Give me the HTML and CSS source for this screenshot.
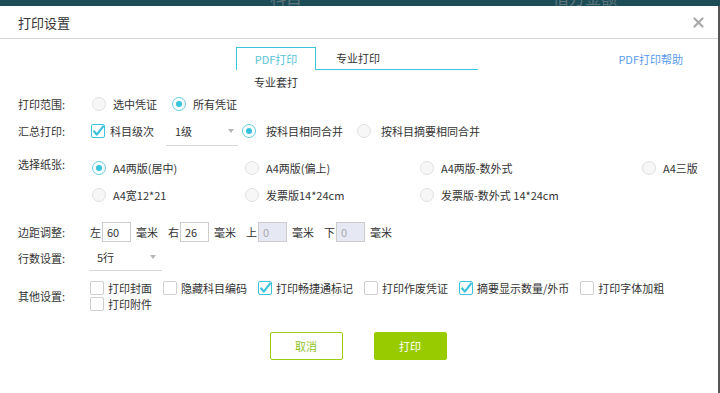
FILE: index.html
```html
<!DOCTYPE html>
<html lang="zh">
<head>
<meta charset="utf-8">
<title>打印设置</title>
<link rel="stylesheet" href="styles.css">
</head>
<body>
<div class="topbar"><span class="bg1">科目</span><span class="bg2">借方金额</span></div>
<div class="shell">
<div class="dialog">
  <div class="header">
    <span class="title">打印设置</span>
    <svg class="close" width="11" height="11" viewBox="0 0 11 11"><path d="M1.5 1.5 L9.5 9.5 M9.5 1.5 L1.5 9.5" stroke="#a9a9a9" stroke-width="2.2" stroke-linecap="round"/></svg>
  </div>

  <div class="tabs">
    <div class="tab active">PDF打印</div>
    <div class="tab-rest">专业打印</div>
    <a class="help">PDF打印帮助</a>
  </div>
  <div class="subtab">专业套打</div>

  <div class="row r1">
    <span class="label">打印范围:</span>
    <label class="opt"><span class="radio"></span>选中凭证</label>
    <label class="opt"><span class="radio on"></span>所有凭证</label>
  </div>

  <div class="row r2">
    <span class="label">汇总打印:</span>
    <label class="copt"><span class="check on"><svg width="14" height="14" viewBox="0 0 14 14"><path d="M2.6 6.8 L5.8 10.6 L12.6 1.8" fill="none" stroke="#3cc3db" stroke-width="2.2" stroke-linejoin="round"/></svg></span>科目级次</label>
    <div class="select s-level"><span>1级</span><i class="arrow"></i></div>
    <label class="opt m1"><span class="radio on"></span>按科目相同合并</label>
    <label class="opt"><span class="radio"></span>按科目摘要相同合并</label>
  </div>

  <div class="row r3">
    <span class="label">选择纸张:</span>
    <div class="paper">
      <label class="opt"><span class="radio on"></span>A4两版(居中)</label>
      <label class="opt"><span class="radio"></span>A4两版(偏上)</label>
      <label class="opt"><span class="radio"></span>A4两版-数外式</label>
      <label class="opt"><span class="radio"></span>A4三版</label>
      <label class="opt"><span class="radio"></span>A4宽12*21</label>
      <label class="opt"><span class="radio"></span>发票版14*24cm</label>
      <label class="opt"><span class="radio"></span>发票版-数外式 14*24cm</label>
    </div>
  </div>

  <div class="row r4">
    <span class="label">边距调整:</span>
    <span class="mg"><span>左</span><input class="num" value="60"><span>毫米</span></span>
    <span class="mg"><span>右</span><input class="num" value="26"><span>毫米</span></span>
    <span class="mg"><span>上</span><input class="num" value="0" disabled><span>毫米</span></span>
    <span class="mg"><span>下</span><input class="num" value="0" disabled><span>毫米</span></span>
  </div>

  <div class="row r5">
    <span class="label">行数设置:</span>
    <div class="select s-rows"><span>5行</span><i class="arrow"></i></div>
  </div>

  <div class="row r6">
    <span class="label">其他设置:</span>
    <div class="others">
      <label class="copt"><span class="check"></span>打印封面</label>
      <label class="copt"><span class="check"></span>隐藏科目编码</label>
      <label class="copt"><span class="check on"><svg width="14" height="14" viewBox="0 0 14 14"><path d="M2.6 6.8 L5.8 10.6 L12.6 1.8" fill="none" stroke="#3cc3db" stroke-width="2.2" stroke-linejoin="round"/></svg></span>打印畅捷通标记</label>
      <label class="copt"><span class="check"></span>打印作废凭证</label>
      <label class="copt"><span class="check on"><svg width="14" height="14" viewBox="0 0 14 14"><path d="M2.6 6.8 L5.8 10.6 L12.6 1.8" fill="none" stroke="#3cc3db" stroke-width="2.2" stroke-linejoin="round"/></svg></span>摘要显示数量/外币</label>
      <label class="copt"><span class="check"></span>打印字体加粗</label>
      <label class="copt"><span class="check"></span>打印附件</label>
    </div>
  </div>

  <div class="buttons">
    <button class="btn cancel">取消</button>
    <button class="btn primary">打印</button>
  </div>
</div>
</div>
</body>
</html>
```
FILE: styles.css
```css
html, body {
  margin: 0;
  padding: 0;
}
body {
  width: 720px;
  height: 393px;
  overflow: hidden;
  background: #555;
  font-family: "Noto Sans CJK SC", "Noto Sans", sans-serif;
  font-size: 11px;
  color: #333;
}
.topbar {
  height: 6px;
  background: #1c4d57;
  overflow: hidden;
  display: flex;
  color: #5f767b;
  font-size: 16px;
  line-height: 16px;
  padding-left: 270px;
}
.topbar span { margin-top: -11px; }
.topbar .bg2 { margin-left: 251px; }

.shell { display: flex; }
.dialog {
  width: 718px;
  height: 387px;
  background: #fff;
}
.header {
  height: 33px;
  box-sizing: border-box;
  border-bottom: 1px solid #d6d6d6;
  display: flex;
  align-items: center;
  justify-content: space-between;
  padding: 0 14px 0 18px;
}
.title {
  font-size: 13px;
  color: #333;
}
.close { display: block; }

.tabs {
  display: flex;
  align-items: flex-end;
  margin-top: 8px;
  padding-left: 236px;
  padding-right: 35px;
}
.tab {
  width: 80px;
  height: 23px;
  box-sizing: border-box;
  border: 1px solid #3cc4dc;
  border-bottom: none;
  text-align: center;
  line-height: 22px;
  color: #55c3d8;
}
.tab-rest {
  width: 162px;
  height: 23px;
  box-sizing: border-box;
  border-bottom: 1px solid #3cc4dc;
  padding-left: 20px;
  line-height: 22px;
  color: #333;
}
.help {
  margin-left: auto;
  color: #5b9bec;
  line-height: 22px;
  align-self: center;
}
.subtab {
  margin-top: 2px;
  margin-left: 236px;
  width: 80px;
  height: 20px;
  line-height: 20px;
  text-align: center;
}

.row {
  display: flex;
  align-items: center;
  padding-left: 18px;
}
.label {
  width: 72px;
  flex: none;
}
.opt, .copt {
  display: inline-flex;
  align-items: center;
  white-space: nowrap;
}
.radio {
  width: 14px;
  height: 14px;
  box-sizing: border-box;
  border-radius: 50%;
  border: 1px solid #e0e0e0;
  background: #f7f7f7;
  margin-right: 7px;
  display: inline-flex;
  align-items: center;
  justify-content: center;
  flex: none;
}
.radio.on {
  border: 1.5px solid #62cde1;
  background: #fff;
}
.radio.on::after {
  content: "";
  width: 6px;
  height: 6px;
  border-radius: 50%;
  background: #36c2db;
}
.check {
  width: 14px;
  height: 14px;
  box-sizing: border-box;
  border: 1px solid #cfcfcf;
  border-radius: 2px;
  background: #fff;
  margin-right: 4px;
  flex: none;
  position: relative;
}
.check.on { border-color: #3cc4dc; }
.check svg {
  position: absolute;
  left: -1px;
  top: -1px;
}

.r1 { height: 24px; }
.r1 .opt { margin-left: 2px; margin-right: 13px; }

.r2 { height: 30px; }
.r2 .copt { margin-left: 1px; }
.r2 .copt .check { margin-right: 5px; }
.r2 .radio { margin-right: 10px; }
.select {
  display: flex;
  align-items: center;
  justify-content: space-between;
  border-bottom: 1px solid #d8d8d8;
  box-sizing: border-box;
  flex: none;
}
.arrow {
  width: 0;
  height: 0;
  border-left: 3.5px solid transparent;
  border-right: 3.5px solid transparent;
  border-top: 4px solid #b5b5b5;
}
.s-level {
  width: 72px;
  height: 30px;
  margin-left: 12px;
  padding: 0 4px 0 9px;
}
.m1 { margin-left: 4px; margin-right: 14px; }

.r3 {
  align-items: flex-start;
  padding-top: 8px;
}
.r3 .label { line-height: 20px; }
.paper {
  margin-left: 2px;
  display: grid;
  grid-template-columns: 153px 175px 222px auto;
  grid-auto-rows: 27px;
}

.r4 { margin-top: 12px; height: 24px; }
.mg {
  display: inline-flex;
  align-items: center;
  margin-right: 10px;
}
.num {
  width: 29px;
  height: 20px;
  box-sizing: border-box;
  border: 1px solid #cccccc;
  padding: 0 0 0 4px;
  margin: 0 5px 0 1px;
  font-family: inherit;
  font-size: 11px;
  color: #333;
  background: #fff;
  outline: none;
}
.num:disabled {
  background: #e6e9f4;
  color: #aaa;
}

.r5 { height: 27px; }
.s-rows {
  width: 73px;
  height: 27px;
  margin-left: -1px;
  padding: 0 6px 0 8px;
}

.r6 { margin-top: 9px; }
.others {
  display: flex;
  flex-wrap: wrap;
  width: 600px;
}
.others .copt {
  height: 16px;
  margin-right: 11px;
}

.buttons {
  margin-top: 20px;
  display: flex;
  justify-content: center;
  gap: 31px;
  padding-right: 2px;
}
.btn {
  width: 73px;
  height: 28px;
  box-sizing: border-box;
  border-radius: 2px;
  font-family: inherit;
  font-size: 11px;
  cursor: pointer;
}
.cancel {
  background: #fff;
  border: 1px solid #9ccb14;
  color: #8fc31f;
}
.primary {
  background: #99cc00;
  border: 1px solid #99cc00;
  color: #fff;
}
```
